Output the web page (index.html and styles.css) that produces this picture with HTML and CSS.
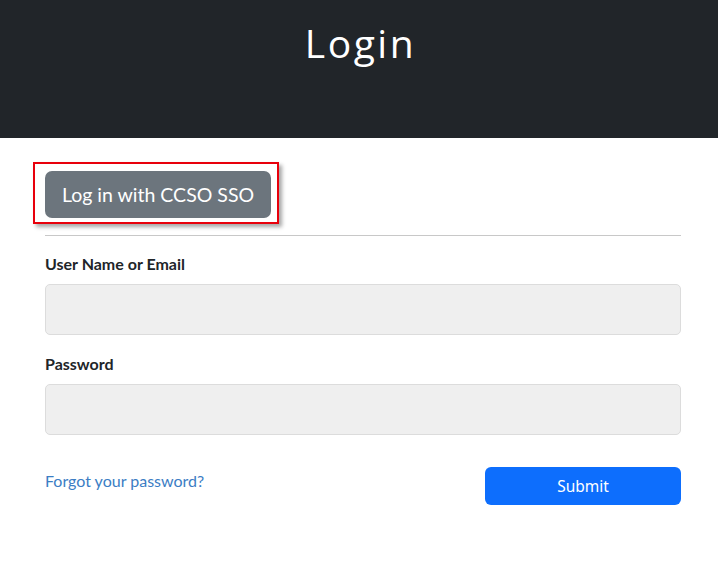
FILE: index.html
```html
<!DOCTYPE html>
<html lang="en">
<head>
<meta charset="utf-8">
<title>Login</title>
<link rel="stylesheet" href="styles.css">
</head>
<body>
<header class="page-header">
  <h1 class="page-title">Login</h1>
</header>
<main class="content">
  <div class="sso-row">
    <div class="sso-highlight">
      <button class="btn-sso" type="button">Log in with CCSO SSO</button>
    </div>
  </div>
  <hr class="divider">
  <form class="login-form">
    <div class="field">
      <label class="field-label" for="user">User Name or Email</label>
      <input class="field-input" id="user" type="text">
    </div>
    <div class="field">
      <label class="field-label" for="pass">Password</label>
      <input class="field-input" id="pass" type="password">
    </div>
    <div class="form-actions">
      <a class="forgot-link" href="#">Forgot your password?</a>
      <button class="btn-submit" type="button">Submit</button>
    </div>
  </form>
</main>
</body>
</html>
```

FILE: styles.css
```css
* { box-sizing: border-box; }
html, body { margin: 0; padding: 0; background: #fff; }
body {
  font-family: "Lato", "Liberation Sans", sans-serif;
  color: #212529;
}
.page-header {
  background: #212529;
  height: 138px;
  display: flex;
  justify-content: center;
  padding-top: 15px;
}
.page-title {
  margin: 0;
  color: #fff;
  font-family: "Open Sans", "Lato", sans-serif;
  font-weight: 400;
  font-size: 39px;
  line-height: 56px;
  letter-spacing: 2.5px;
  padding-left: 3px;
}
.content {
  padding: 0 37px 0 45px;
}
.sso-row {
  padding-top: 24px;
  margin-left: -12px;
}
.sso-highlight {
  display: inline-block;
  border: 2px solid #e8000b;
  padding: 7px 6px 4px 10px;
  box-shadow: 3px 3px 4px rgba(0,0,0,0.35);
}
.btn-sso {
  display: block;
  width: 226px;
  height: 47px;
  border: none;
  border-radius: 7px;
  background: #6c757d;
  color: #fff;
  font-family: "Lato", sans-serif;
  font-size: 19.5px;
  padding: 0;
}
.divider {
  margin: 11px 0 0;
  border: none;
  border-top: 1px solid #c8c8c8;
}
.login-form { padding-top: 18px; }
.field { margin-bottom: 19px; }
.field-label {
  display: block;
  font-weight: 700;
  font-size: 16px;
  line-height: 19px;
  margin-bottom: 11px;
}
.field-input {
  display: block;
  width: 100%;
  height: 51px;
  background: #efefef;
  border: 1px solid #dcdcdc;
  border-radius: 5px;
}
.form-actions {
  display: flex;
  justify-content: space-between;
  align-items: flex-start;
  margin-top: 32px;
}
.forgot-link {
  color: #3b7dc4;
  text-decoration: none;
  font-size: 16px;
  margin-top: 4px;
}
.btn-submit {
  width: 196px;
  height: 38px;
  border: none;
  border-radius: 6px;
  background: #0d6efd;
  color: #fff;
  font-family: "Noto Sans", "Open Sans", sans-serif;
  font-size: 15.5px;
}
```
